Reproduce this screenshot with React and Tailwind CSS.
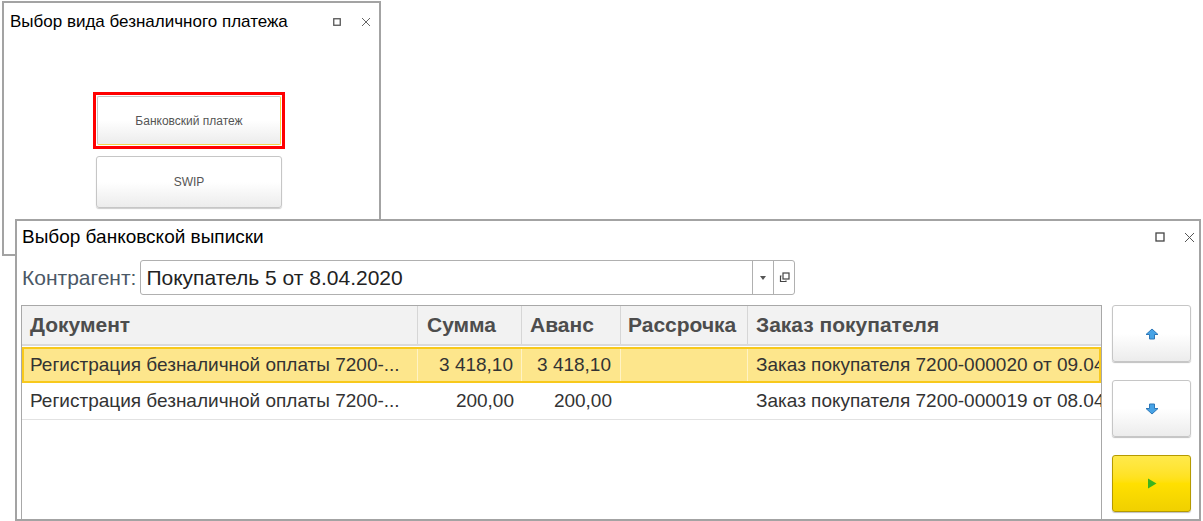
const font = { fontFamily: '"Liberation Sans", Arial, sans-serif' };

const MaxIcon = () => (
  <svg width="10" height="10" viewBox="0 0 10 10">
    <rect x="1" y="1" width="8" height="8" fill="none" stroke="#444" strokeWidth="1.3" />
  </svg>
);

const CloseIcon = () => (
  <svg width="11" height="11" viewBox="0 0 11 11">
    <path d="M1 1 L10 10 M10 1 L1 10" stroke="#555" strokeWidth="1" />
  </svg>
);

const ArrowUp = () => (
  <svg width="14" height="12" viewBox="0 0 14 12">
    <path d="M7 1 L13 6.5 L9.5 6.5 L9.5 11 L4.5 11 L4.5 6.5 L1 6.5 Z" fill="#47a3e6" stroke="#2d78b8" strokeWidth="1" strokeLinejoin="round" />
  </svg>
);

const ArrowDown = () => (
  <svg width="14" height="12" viewBox="0 0 14 12">
    <path d="M7 11 L13 5.5 L9.5 5.5 L9.5 1 L4.5 1 L4.5 5.5 L1 5.5 Z" fill="#47a3e6" stroke="#2d78b8" strokeWidth="1" strokeLinejoin="round" />
  </svg>
);

const Play = () => (
  <svg width="10" height="11" viewBox="0 0 10 11">
    <path d="M1 0.5 L9.5 5.5 L1 10.5 Z" fill="#3cb41e" />
  </svg>
);

const rows = [
  { doc: 'Регистрация безналичной оплаты 7200-...', sum: '3 418,10', adv: '3 418,10', order: 'Заказ покупателя 7200-000020 от 09.04', sel: true },
  { doc: 'Регистрация безналичной оплаты 7200-...', sum: '200,00', adv: '200,00', order: 'Заказ покупателя 7200-000019 от 08.04', sel: false },
];

const SideButton = ({ children, yellow }) => (
  <button
    className={
      yellow
        ? 'w-[79px] h-[57px] rounded-[3px] border border-[#b59a00] bg-gradient-to-b from-[#ffe94a] via-[#ffe000] to-[#f0d000] shadow-[0_1px_1px_rgba(0,0,0,0.25)] flex items-center justify-center'
        : 'w-[79px] h-[57px] rounded-[3px] border border-[#c6c6c6] bg-gradient-to-b from-white via-white to-[#ececec] shadow-[0_1px_1px_rgba(0,0,0,0.25)] flex items-center justify-center'
    }
  >
    {children}
  </button>
);

export default function App() {
  return (
    <div className="relative w-[1203px] h-[521px] bg-white overflow-hidden" style={font}>
      {/* Окно выбора вида платежа */}
      <div className="absolute left-[2px] top-[1px] w-[379px] h-[255px] border-2 border-[#a3a3a3] bg-white">
        <div className="h-[38px] flex items-center justify-between pl-[6px] pr-[8px]">
          <span className="text-[17px] text-black">Выбор вида безналичного платежа</span>
          <div className="flex items-center gap-[20px]">
            <svg width="8" height="8" viewBox="0 0 8 8">
              <rect x="0.75" y="0.75" width="6.5" height="6.5" fill="none" stroke="#555" strokeWidth="1.3" />
            </svg>
            <svg width="10" height="10" viewBox="0 0 10 10">
              <path d="M1 1 L9 9 M9 1 L1 9" stroke="#666" strokeWidth="1" />
            </svg>
          </div>
        </div>
        <div className="flex flex-col pl-[89px] pt-[51px] gap-[7px]">
          <div className="w-[192px] h-[57px] border-[3px] border-[#ff0000] p-[1px]">
            <button className="w-full h-full rounded-[2px] border border-[#c6c6c6] border-r-[#f3d54a] border-b-[#f3d54a] bg-gradient-to-b from-white via-white to-[#ececec] text-[12px] text-[#555]">
              Банковский платеж
            </button>
          </div>
          <button className="ml-[3px] w-[186px] h-[52px] rounded-[3px] border border-[#c6c6c6] bg-gradient-to-b from-white via-white to-[#ececec] shadow-[0_1px_1px_rgba(0,0,0,0.2)] text-[12px] text-[#555]">
            SWIP
          </button>
        </div>
      </div>

      {/* Окно выбора банковской выписки */}
      <div className="absolute left-[15px] top-[219px] w-[1186px] h-[302px] border-2 border-[#a3a3a3] bg-white flex flex-col">
        <div className="h-[32px] shrink-0 flex items-center justify-between pl-[5px] pr-[4px]">
          <span className="text-[19px] text-black">Выбор банковской выписки</span>
          <div className="flex items-center gap-[19px]">
            <MaxIcon />
            <CloseIcon />
          </div>
        </div>

        <div className="mt-[7px] h-[35px] shrink-0 flex items-center pl-[5px]">
          <span className="text-[21px] text-[#4b5866] mr-[4px]">Контрагент:</span>
          <div className="w-[655px] h-[35px] flex border border-[#b0b0b0] rounded-[3px] bg-white">
            <div className="flex-1 flex items-center pl-[5px] text-[21px] text-[#222]">Покупатель 5 от 8.04.2020</div>
            <div className="w-[21px] border-l border-[#b0b0b0] flex items-center justify-center">
              <svg width="6" height="4" viewBox="0 0 6 4">
                <path d="M0 0 L6 0 L3 4 Z" fill="#555" />
              </svg>
            </div>
            <div className="w-[21px] border-l border-[#b0b0b0] flex items-center justify-center">
              <svg width="11" height="11" viewBox="0 0 11 11">
                <rect x="4" y="1" width="6" height="6" fill="none" stroke="#444" strokeWidth="1.2" />
                <path d="M2.5 4 L1.5 4 L1.5 9.5 L7 9.5 L7 8.5" fill="none" stroke="#444" strokeWidth="1.2" />
              </svg>
            </div>
          </div>
        </div>

        <div className="mt-[10px] flex-1 flex pl-[4px] gap-[10px]">
          <div className="w-[1081px] border border-[#a8a8a8] border-b-0 overflow-hidden">
            <div className="flex h-[40px] bg-[#f2f2f2] border-b-2 border-[#dadada] text-[21px] font-bold text-[#4d4d4d]">
              <div className="w-[396px] border-r border-[#d6d6d6] flex items-center pl-[8px]">Документ</div>
              <div className="w-[104px] border-r border-[#d6d6d6] flex items-center pl-[9px]">Сумма</div>
              <div className="w-[99px] border-r border-[#d6d6d6] flex items-center pl-[8px]">Аванс</div>
              <div className="w-[127px] border-r border-[#d6d6d6] flex items-center pl-[7px]">Рассрочка</div>
              <div className="flex-1 flex items-center pl-[8px] whitespace-nowrap">Заказ покупателя</div>
            </div>
            {rows.map((r, i) => (
              <div
                key={i}
                className={
                  r.sel
                    ? 'flex h-[36px] mt-[1px] bg-[#fde68c] border-2 border-[#f8c91c] text-[19px] text-[#333] whitespace-nowrap'
                    : 'flex h-[37px] border-b border-[#e2e2e2] text-[19px] text-[#333] whitespace-nowrap'
                }
              >
                <div className={r.sel ? 'w-[394px] border-r border-[#fff3c4] flex items-center pl-[6px]' : 'w-[396px] flex items-center pl-[8px]'}>{r.doc}</div>
                <div className={r.sel ? 'w-[104px] border-r border-[#fff3c4] flex items-center justify-end pr-[8px]' : 'w-[104px] flex items-center justify-end pr-[8px]'}>{r.sum}</div>
                <div className={r.sel ? 'w-[99px] border-r border-[#fff3c4] flex items-center justify-end pr-[9px]' : 'w-[99px] flex items-center justify-end pr-[9px]'}>{r.adv}</div>
                <div className={r.sel ? 'w-[127px] border-r border-[#fff3c4]' : 'w-[127px]'} />
                <div className="flex-1 flex items-center pl-[8px] overflow-hidden">{r.order}</div>
              </div>
            ))}
          </div>
          <div className="flex flex-col gap-[18px]">
            <SideButton>
              <ArrowUp />
            </SideButton>
            <SideButton>
              <ArrowDown />
            </SideButton>
            <SideButton yellow>
              <Play />
            </SideButton>
          </div>
        </div>
      </div>
    </div>
  );
}
